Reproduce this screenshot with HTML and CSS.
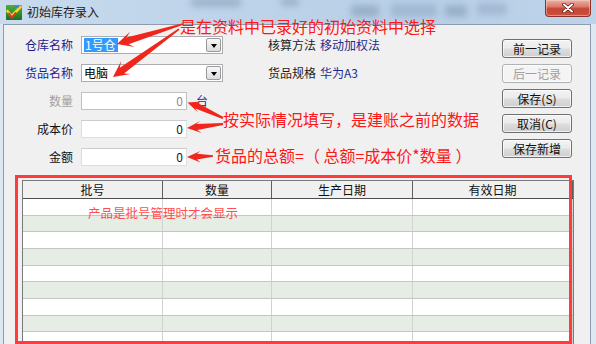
FILE: index.html
```html
<!DOCTYPE html>
<html lang="zh-CN">
<head>
<meta charset="utf-8">
<title>初始库存录入</title>
<link rel="stylesheet" href="styles.css">
</head>
<body>
<div class="window">
  <div class="titlebar">
    <span class="appicon">
      <svg width="16" height="15" viewBox="0 0 16 15">
        <defs>
          <linearGradient id="ig" x1="0" y1="0" x2="0" y2="1">
            <stop offset="0" stop-color="#4fae3c"/>
            <stop offset="1" stop-color="#1f6e22"/>
          </linearGradient>
        </defs>
        <rect x="0" y="0" width="16" height="15" rx="1" fill="url(#ig)"/>
        <path d="M1.5 6 L5.5 11 L14.5 2" fill="none" stroke="#f5d233" stroke-width="2.6" stroke-linecap="round" stroke-linejoin="round"/>
        <path d="M3 8.5 L6 12.5 L9.5 8" fill="none" stroke="#e0362a" stroke-width="2" stroke-linecap="round" stroke-linejoin="round"/>
        <path d="M9 2 L13 1.5" stroke="#3a7bd5" stroke-width="1.5"/>
      </svg>
    </span>
    <span class="title">初始库存录入</span>
    <span class="glass">
      <span class="blob b1"></span>
      <span class="blob b2"></span>
      <span class="blob b3"></span>
      <span class="blob b4"></span>
      <span class="blob b5"></span>
      <span class="blob b6"></span>
    </span>
    <span class="close">
      <svg width="14" height="10" viewBox="0 0 14 10">
        <path d="M3 1.5 L11 8.5 M11 1.5 L3 8.5" stroke="#5b1c16" stroke-width="3.6" stroke-linecap="round"/>
        <path d="M3 1.5 L11 8.5 M11 1.5 L3 8.5" stroke="#ffffff" stroke-width="2" stroke-linecap="round"/>
      </svg>
    </span>
  </div>

  <div class="client">
    <div class="top">
      <div class="form">
        <div class="row">
          <span class="lbl blue">仓库名称</span>
          <div class="combo"><span class="ctext"><span class="sel">1号仓</span></span><span class="drop"></span></div>
          <span class="lbl2">核算方法</span><span class="val">移动加权法</span>
        </div>
        <div class="row">
          <span class="lbl blue">货品名称</span>
          <div class="combo"><span class="ctext">电脑</span><span class="drop"></span></div>
          <span class="lbl2">货品规格</span><span class="val">华为A3</span>
        </div>
        <div class="row">
          <span class="lbl gray">数量</span>
          <div class="input dis">0</div>
          <span class="unit">台</span>
        </div>
        <div class="row">
          <span class="lbl">成本价</span>
          <div class="input">0</div>
        </div>
        <div class="row">
          <span class="lbl">金额</span>
          <div class="input">0</div>
        </div>
      </div>
      <div class="buttons">
        <div class="btn">前一记录</div>
        <div class="btn disabled">后一记录</div>
        <div class="btn">保存(S)</div>
        <div class="btn">取消(C)</div>
        <div class="btn">保存新增</div>
      </div>
    </div>

    <div class="grid">
      <div class="hdr">
        <div class="c c1">批号</div>
        <div class="c c2">数量</div>
        <div class="c c3">生产日期</div>
        <div class="c c4">有效日期</div>
      </div>
      <div class="r"><div class="c c1"></div><div class="c c2"></div><div class="c c3"></div><div class="c c4"></div></div>
      <div class="r"><div class="c c1"></div><div class="c c2"></div><div class="c c3"></div><div class="c c4"></div></div>
      <div class="r"><div class="c c1"></div><div class="c c2"></div><div class="c c3"></div><div class="c c4"></div></div>
      <div class="r"><div class="c c1"></div><div class="c c2"></div><div class="c c3"></div><div class="c c4"></div></div>
      <div class="r"><div class="c c1"></div><div class="c c2"></div><div class="c c3"></div><div class="c c4"></div></div>
      <div class="r"><div class="c c1"></div><div class="c c2"></div><div class="c c3"></div><div class="c c4"></div></div>
      <div class="r"><div class="c c1"></div><div class="c c2"></div><div class="c c3"></div><div class="c c4"></div></div>
      <div class="r"><div class="c c1"></div><div class="c c2"></div><div class="c c3"></div><div class="c c4"></div></div>
      <div class="r"><div class="c c1"></div><div class="c c2"></div><div class="c c3"></div><div class="c c4"></div></div>
      <div class="r"><div class="c c1"></div><div class="c c2"></div><div class="c c3"></div><div class="c c4"></div></div>
    </div>
  </div>

  <div class="annot">
    <svg width="596" height="344" viewBox="0 0 596 344">
      <rect x="16.5" y="176.5" width="554" height="166" fill="none" stroke="#ff3b3b" stroke-width="3"/>
      <g fill="#f0261c">
        <polygon points="182.8,23.2 126.5,37.5 130,31.7 117,44 134.6,47 128.6,44.2 183.2,24.8"/>
        <polygon points="178.5,28.4 119.8,67.7 121.2,61.1 113,77 130.7,74.1 124,73.4 179.5,29.7"/>
        <polygon points="223.4,117.1 197.4,102.7 202.1,101.4 187.5,102.5 198,112.5 195.3,108.4 222.6,119"/>
        <polygon points="222.9,123 196.6,124 200.2,121 187,128 201.6,133 197.3,129.9 223.1,125"/>
        <polygon points="213,155.2 197,153.8 200.5,151 187,157 200.5,162.5 197,159.6 213,156.8"/>
      </g>
    </svg>
    <span class="note n1">是在资料中已录好的初始资料中选择</span>
    <span class="note n2">按实际情况填写，是建账之前的数据</span>
    <span class="note n3">货品的总额=（ 总额=成本价*数量 ）</span>
    <span class="hint">产品是批号管理时才会显示</span>
  </div>
</div>
</body>
</html>
```

FILE: styles.css
```css
* { box-sizing: border-box; }

html, body {
  margin: 0;
  padding: 0;
}

body {
  width: 596px;
  height: 344px;
  overflow: hidden;
  font-family: "Noto Sans CJK SC", "Microsoft YaHei", sans-serif;
  font-size: 12px;
  background: #d6e4f1;
}

.window {
  position: relative;
  width: 596px;
  height: 344px;
  overflow: hidden;
  display: flex;
  flex-direction: column;
  background: linear-gradient(90deg, #dce7f2, #d3e1ef 50%, #dde8f3);
}

/* ---------- title bar ---------- */
.titlebar {
  height: 24px;
  flex: none;
  display: flex;
  align-items: center;
  background: linear-gradient(90deg, #c9dbed 0, #bed4ea 35%, #b8cfe7 70%, #bdd3ea 100%);
}

.appicon {
  width: 16px;
  height: 15px;
  margin-left: 6px;
  margin-top: 1px;
}
.appicon svg { display: block; }

.title {
  margin-left: 5px;
  color: #1b1b1b;
  font-size: 12px;
  line-height: 16px;
}

.glass {
  flex: 1;
  height: 24px;
  display: flex;
  align-items: flex-start;
}

.blob {
  display: block;
  height: 12px;
  background: rgba(95, 120, 150, 0.35);
  filter: blur(3px);
  border-radius: 3px;
}
.b1 { width: 50px; margin-left: 92px; margin-top: -2px; height: 9px; }
.b2 { width: 18px; margin-left: 40px; margin-top: -2px; height: 8px; }
.b3 { width: 28px; margin-left: 52px; margin-top: 5px; }
.b4 { width: 46px; margin-left: 12px; margin-top: 4px; height: 13px; background: rgba(95, 120, 150, 0.25); }
.b5 { width: 22px; margin-left: 8px; margin-top: 5px; }
.b6 { width: 30px; margin-left: 10px; margin-top: 3px; background: rgba(95, 120, 150, 0.25); }

.close {
  width: 46px;
  height: 17px;
  margin-left: auto;
  margin-right: 5px;
  align-self: flex-start;
  display: flex;
  align-items: center;
  justify-content: center;
  background: linear-gradient(#eab0a6 0, #dc7c6f 40%, #c84433 55%, #c9523f 100%);
  border: 1px solid #8c3329;
  border-top: none;
  border-radius: 0 0 4px 4px;
  box-shadow: inset 0 0 0 1px rgba(255, 220, 210, 0.45);
}
.close svg { display: block; }

/* ---------- client area ---------- */
.client {
  flex: 1;
  margin: 0 5px 0 3px;
  border: 1px solid #8c9cae;
  border-bottom: none;
  background: #f0f0f0;
  overflow: hidden;
}

.top {
  display: flex;
  height: 155px;
}

.form {
  padding-top: 11px;
  display: flex;
  flex-direction: column;
  gap: 10px;
}

.row {
  display: flex;
  align-items: center;
  height: 18px;
}

.lbl {
  width: 69px;
  margin-right: 8px;
  text-align: right;
  line-height: 16px;
  color: #111;
}
.lbl.blue { color: #1c1c92; }
.lbl.gray { color: #a2a2a2; }

.combo {
  width: 142px;
  height: 18px;
  border: 1px solid #abadb3;
  background: #fff;
  display: flex;
  align-items: center;
  padding: 1px 1px 1px 1px;
}

.ctext {
  flex: 1;
  line-height: 14px;
  color: #000;
  padding-left: 1px;
}

.sel {
  display: inline-block;
  background: #3399ff;
  color: #fff;
  padding: 0 2px 0 1px;
  line-height: 14px;
}

.drop {
  width: 15px;
  height: 14px;
  border: 1px solid #9b9b9b;
  border-radius: 2px;
  background: linear-gradient(#f7f7f7, #dcdcdc);
  display: flex;
  align-items: center;
  justify-content: center;
}
.drop::after {
  content: "";
  width: 0;
  height: 0;
  margin-top: 1px;
  border-left: 3.5px solid transparent;
  border-right: 3.5px solid transparent;
  border-top: 4px solid #000;
}

.lbl2 {
  margin-left: 45px;
  width: 48px;
  margin-right: 4px;
  color: #1e1e1e;
  line-height: 14px;
}

.val {
  color: #202c8e;
  line-height: 14px;
}

.input {
  width: 106px;
  height: 18px;
  border: 1px solid #dcdee2;
  border-top-color: #c9ccd1;
  background: #fff;
  text-align: right;
  padding-right: 3px;
  line-height: 16px;
  color: #1a1a1a;
}
.input.dis {
  border-color: #bfc1c4;
  color: #8c8c8c;
}

.unit {
  margin-left: 9px;
  color: #1c1c92;
  line-height: 16px;
}

.buttons {
  margin-left: auto;
  margin-right: 18px;
  padding-top: 14px;
  display: flex;
  flex-direction: column;
  gap: 6px;
}

.btn {
  width: 70px;
  height: 19px;
  border: 1px solid #707070;
  border-radius: 3px;
  background: linear-gradient(#f3f3f3 0, #ebebeb 48%, #dddddd 52%, #cfcfcf 100%);
  box-shadow: inset 0 0 0 1px rgba(255, 255, 255, 0.7);
  text-align: center;
  line-height: 17px;
  color: #111;
}
.btn.disabled {
  border-color: #adb2b5;
  background: #f4f4f4;
  color: #a0a0a0;
}

/* ---------- grid ---------- */
.grid {
  margin-left: 18px;
  width: 552px;
  border: 1px solid #7a7a7a;
  border-bottom: none;
  background: #fff;
}

.hdr {
  display: flex;
  height: 18px;
  background: #f0f0f0;
  border-bottom: 1px solid #4e4e4e;
}
.hdr .c {
  border-right: 1px solid #5e5e5e;
  text-align: center;
  line-height: 17px;
  color: #111;
}

.c { height: 100%; border-right: 1px solid #d2d2d2; }
.c1 { width: 140px; }
.c2 { width: 109px; }
.c3 { width: 141px; }
.c4 { flex: 1; }

.r {
  display: flex;
  height: 16.67px;
  border-bottom: 1px solid #c5c5c5;
  background: #fff;
}
.r:nth-child(odd) { background: #e6ede5; }

/* ---------- annotations ---------- */
.annot {
  position: absolute;
  left: 0;
  top: 0;
  width: 596px;
  height: 344px;
  pointer-events: none;
}
.annot svg {
  position: absolute;
  left: 0;
  top: 0;
}

.note {
  position: absolute;
  color: #ff1616;
  font-size: 16px;
  line-height: 15px;
  white-space: nowrap;
}
.n1 { left: 180px; top: 19px; }
.n2 { left: 223px; top: 112px; }
.n3 { left: 215px; top: 148px; }

.hint {
  position: absolute;
  left: 88px;
  top: 206px;
  font-size: 12.5px;
  line-height: 14px;
  color: #ff5050;
  white-space: nowrap;
}
```
